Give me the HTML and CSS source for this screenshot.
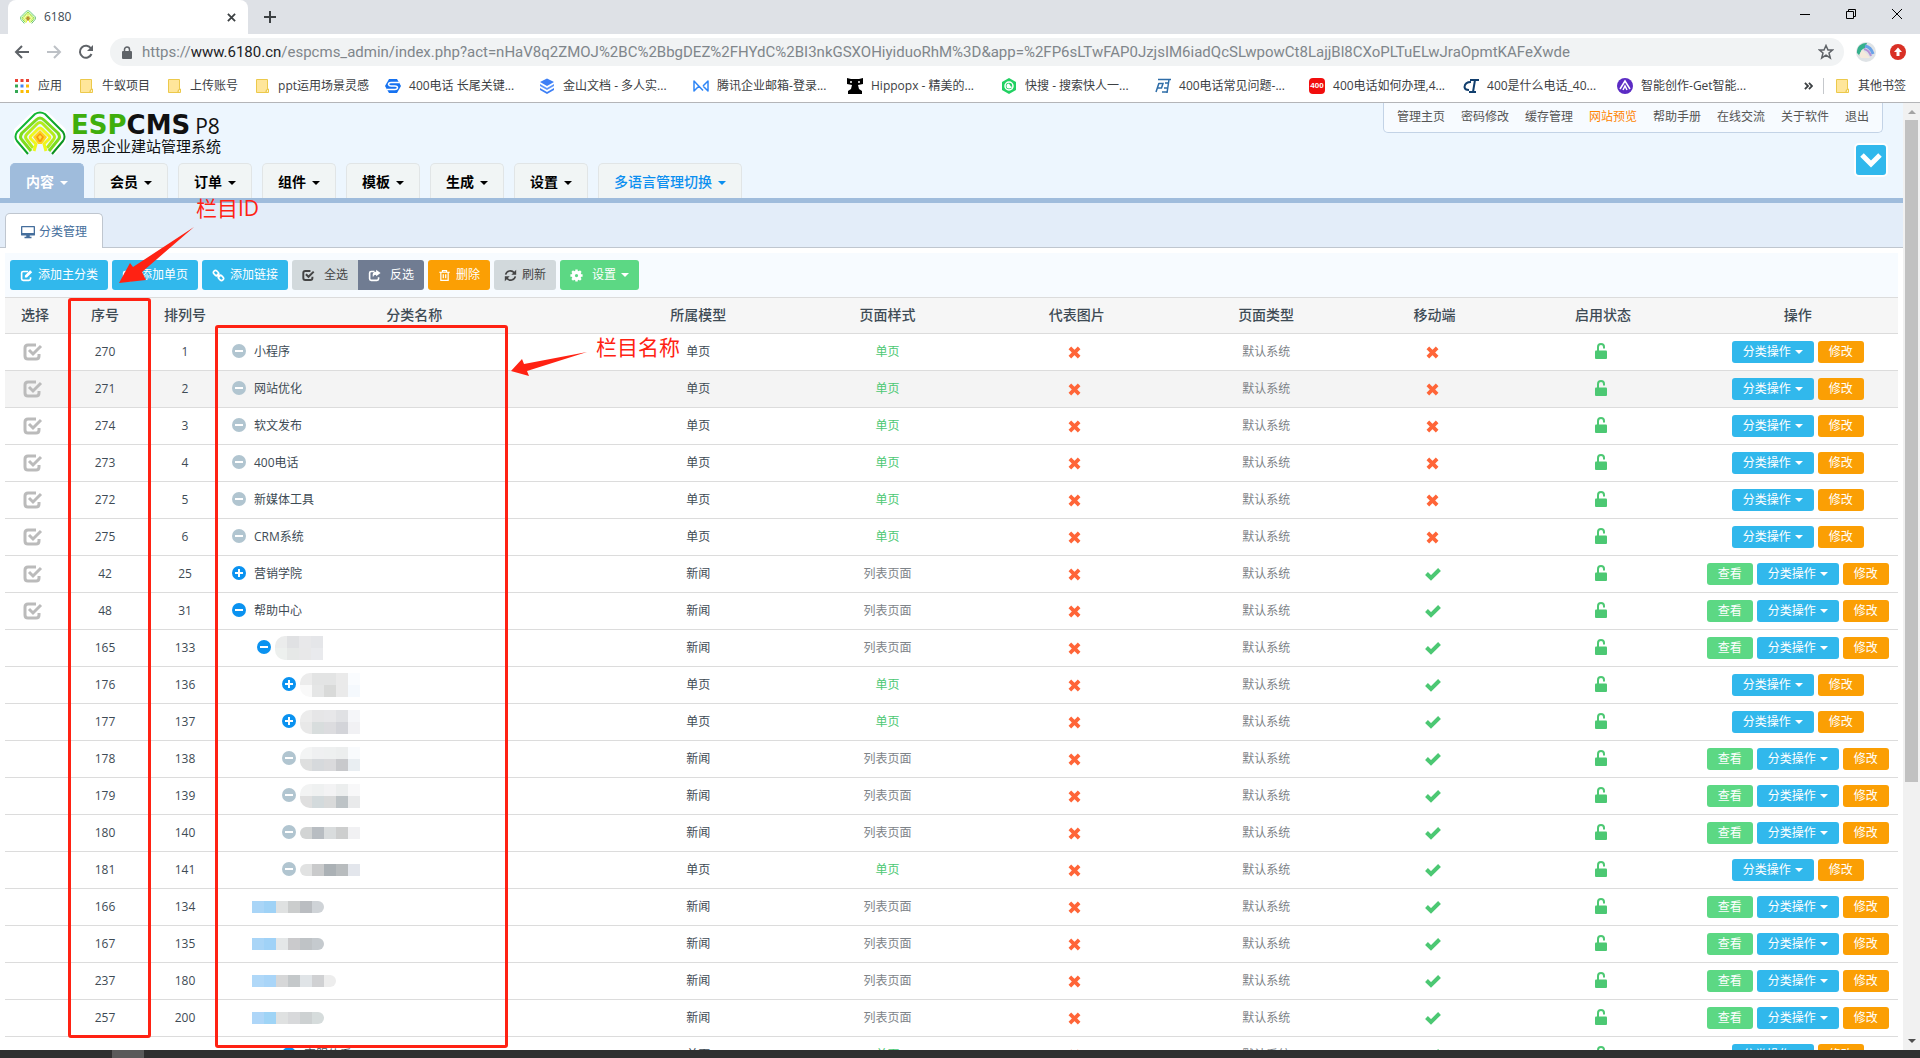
FILE: index.html
```
<!DOCTYPE html>
<html lang="zh-CN">
	<head>
		<meta charset="utf-8">
		<meta name="viewport" content="width=device-width, initial-scale=1.0">
		<title>6180</title>
		<link rel="stylesheet" href="styles.css">
	</head>
	<body>
		<!-- 图标库 -->
		<svg class="icon-defs" aria-hidden="true">
			<symbol id="i-logo" viewBox="0 0 52 44">
				<linearGradient id="g1" x1="0" y1="0" x2="1" y2="1"><stop offset="0" stop-color="#12c43a"/><stop offset="1" stop-color="#0a8a1c"/></linearGradient>
				<g fill="none" stroke-linejoin="round">
					<path stroke="#fff" stroke-width="8" d="M14 41L4 30Q1 26 3 21L21 4Q26 0 31 4L48 20Q51 26 48 30L38 41"/>
					<path stroke="url(#g1)" stroke-width="2" d="M14 43L3 30Q0 26 3 21L21 3Q26 0 31 3L49 21Q52 26 49 30L38 43"/>
					<path stroke="#7ddc1e" stroke-width="3" d="M17 40L8 29Q5 26 8 22L22 9Q26 5 30 9L44 22Q47 26 44 29L35 40"/>
					<path stroke="#b4ec1c" stroke-width="3" d="M19 37L13 29Q10 26 13 23L23 13Q26 10 29 13L39 23Q42 26 39 29L33 37"/>
					<path stroke="#eef71c" stroke-width="3" d="M20 40L22 33L17 28Q15 26 18 24L24 18Q26 16 28 18L34 24Q37 26 35 28L30 33L32 40"/>
				</g>
				<path fill="#ffd21c" d="M26 19L33 26L28 33H24L19 26Z"/>
				<path fill="#f79a10" d="M26 22L30 26L27 31H25L22 26Z"/>
				<path fill="#ffe14a" d="M26 24L28 26L26 29L24 26Z"/>
			</symbol>
			<symbol id="i-folder" viewBox="0 0 16 16"><path fill="#ffe69a" stroke="#ecc94b" d="M2.500 1.500H13.500V11Q12 11 12 14.500H2.500Z"/><path fill="#fff2c4" stroke="#ecc94b" d="M12 14.500Q12 11 14.500 11V14.500Z"/></symbol>
			<symbol id="i-edit" viewBox="0 0 16 16"><path fill="none" stroke="currentColor" stroke-width="2" d="M10 3H4Q2 3 2 5V12Q2 14 4 14H11Q13 14 13 12V10"/><path fill="currentColor" d="M6 8L12.500 1.500L15 4L8.500 10.500H6Z"/></symbol>
			<symbol id="i-link" viewBox="0 0 16 16"><g fill="none" stroke="currentColor" stroke-width="2"><rect x="1.500" y="2.500" width="7" height="5" rx="2.500" transform="rotate(45 5 5)"/><rect x="7.500" y="8.500" width="7" height="5" rx="2.500" transform="rotate(45 11 11)"/><path d="M6 6L10 10"/></g></symbol>
			<symbol id="i-check-box" viewBox="0 0 20 18"><path fill="none" stroke="currentColor" stroke-width="3" d="M13 2H5Q2 2 2 5V13Q2 16 5 16H13Q16 16 16 13V11"/><path fill="none" stroke="currentColor" stroke-width="3" d="M6 7L10 11L18 3"/></symbol>
			<symbol id="i-share" viewBox="0 0 16 16"><path fill="none" stroke="currentColor" stroke-width="2" d="M8 3H4Q2 3 2 5V12Q2 14 4 14H11Q13 14 13 12V10"/><path fill="currentColor" d="M10 1L15.500 5L10 9V7Q7 7 6 10Q4.500 3.500 10 3.500Z"/></symbol>
			<symbol id="i-trash" viewBox="0 0 16 16"><path fill="none" stroke="currentColor" stroke-width="1.500" d="M1.500 4H14.500M5.500 4V2H10.500V4M3.500 4V14H12.500V4M6.500 6.500V11.500M9.500 6.500V11.500"/></symbol>
			<symbol id="i-refresh" viewBox="0 0 16 16"><path fill="none" stroke="currentColor" stroke-width="2" d="M2 7A6 6 0 0 1 12.500 4.500M14 9A6 6 0 0 1 3.500 11.500"/><path fill="currentColor" d="M15 1V7H9ZM1 15V9H7Z"/></symbol>
			<symbol id="i-gear" viewBox="0 0 16 16"><circle cx="8" cy="8" r="4" fill="none" stroke="currentColor" stroke-width="4"/><path stroke="currentColor" stroke-width="3" d="M8 0.500V3M8 13V15.500M0.500 8H3M13 8H15.500M2.700 2.700L4.500 4.500M11.500 11.500L13.300 13.300M2.700 13.300L4.500 11.500M11.500 4.500L13.300 2.700"/></symbol>
			<symbol id="i-screen" viewBox="0 0 16 16"><path fill="currentColor" d="M1 1H15Q16 1 16 2V11Q16 12 15 12H10V13.500H12V15H4V13.500H6V12H1Q0 12 0 11V2Q0 1 1 1ZM1.500 2.500V9H14.500V2.500Z"/></symbol>
			<symbol id="i-times" viewBox="0 0 14 14"><path stroke="currentColor" stroke-width="4" d="M2 2L12 12M12 2L2 12"/></symbol>
			<symbol id="i-check" viewBox="0 0 16 14"><path fill="none" stroke="currentColor" stroke-width="4" d="M1.500 6.500L6 11L14.500 2.500"/></symbol>
			<symbol id="i-unlock" viewBox="0 0 12 16"><path fill="none" stroke="currentColor" stroke-width="2" d="M3 8V4A3 3 0 0 1 9 4V5.500"/><rect y="7.500" width="12" height="8.500" rx="1" fill="currentColor"/></symbol>
			<symbol id="i-minus" viewBox="0 0 14 14"><circle cx="7" cy="7" r="7" fill="currentColor"/><path stroke="#fff" stroke-width="2" d="M3 7H11"/></symbol>
			<symbol id="i-plus" viewBox="0 0 14 14"><circle cx="7" cy="7" r="7" fill="currentColor"/><path stroke="#fff" stroke-width="2" d="M3 7H11M7 3V11"/></symbol>
		</svg>

		<!-- 浏览器标签栏 -->
		<div class="tabstrip">
			<div class="browser-tab">
				<svg class="favicon"><use href="#i-logo"/></svg>
				<span>6180</span>
				<button aria-label="关闭标签页"><svg viewBox="0 0 10 10"><path d="M1 1L9 9M9 1L1 9"/></svg></button>
			</div>
			<button class="new-tab" aria-label="新标签页"><svg viewBox="0 0 12 12"><path d="M6 0V12M0 6H12"/></svg></button>
			<div class="window-btns">
				<button aria-label="最小化"><svg viewBox="0 0 10 10"><path d="M0 5.500H10"/></svg></button>
				<button aria-label="还原"><svg viewBox="0 0 10 10"><path d="M0.500 2.500H7.500V9.500H0.500ZM2.500 2.500V0.500H9.500V7.500H7.500"/></svg></button>
				<button aria-label="关闭"><svg viewBox="0 0 10 10"><path d="M0 0L10 10M10 0L0 10"/></svg></button>
			</div>
		</div>
		<div class="addressbar">
			<button class="nav-btn" aria-label="后退"><svg viewBox="0 0 16 16"><path d="M15 8H2M8 2L2 8L8 14"/></svg></button>
			<button class="nav-btn disabled" aria-label="前进"><svg viewBox="0 0 16 16"><path d="M1 8H14M8 2L14 8L8 14"/></svg></button>
			<button class="nav-btn" aria-label="刷新"><svg viewBox="0 0 16 16"><path d="M13.500 10A6 6 0 1 1 13 4.500"/><path class="solid" d="M15 1V7H9Z"/></svg></button>
			<div class="omnibox">
				<svg class="lock" viewBox="0 0 10 13"><path fill="none" stroke="#5f6368" stroke-width="1.500" d="M2.500 6V3.500A2.500 2.500 0 0 1 7.500 3.500V6"/><rect y="5" width="10" height="8" rx="1" fill="#5f6368"/></svg>
				<div class="url" role="textbox" contenteditable="true" spellcheck="false" aria-label="地址">https://<b>www.6180.cn</b>/espcms_admin/index.php?act=nHaV8q2ZMOJ%2BC%2BbgDEZ%2FHYdC%2BI3nkGSXOHiyiduoRhM%3D&amp;app=%2FP6sLTwFAP0JzjsIM6iadQcSLwpowCt8LajjBl8CXoPLTuELwJraOpmtKAFeXwde</div>
				<button class="star" aria-label="收藏"><svg viewBox="0 0 16 16"><path d="M8 1.500L10 6H14.500L11 9L12.300 14L8 11.200L3.700 14L5 9L1.500 6H6Z"/></svg></button>
			</div>
			<svg class="avatar" viewBox="0 0 20 20"><circle cx="10" cy="10" r="10" fill="#dfe3e6"/><path fill="#35b08c" d="M1 11A9 9 0 0 1 11 1L9 6Q4 7 4 14Z"/><path fill="none" stroke="#6aa2e8" stroke-width="3" d="M9 4Q15 5 17 12"/><path fill="none" stroke="#b391d8" stroke-width="2" d="M8 7Q13 8 15 14"/><path fill="#f4e9dc" d="M6 8L11 12L14 16H5L3 13Z"/></svg>
			<svg class="update" viewBox="0 0 16 16"><circle cx="8" cy="8" r="8" fill="#d93025"/><path fill="#fff" d="M8 3.500L12 8H9.500V12H6.500V8H4Z"/></svg>
		</div>
		<nav class="bookmarks">
			<a href="#"><svg viewBox="0 0 16 16"><path fill="#ea4335" d="M1 1h3v3h-3zM6.500 1h3v3h-3zM12 1h3v3h-3z"/><path fill="#34a853" d="M1 6.500h3v3h-3zM1 12h3v3h-3z"/><path fill="#4285f4" d="M6.500 6.500h3v3h-3z"/><path fill="#fbbc05" d="M12 6.500h3v3h-3zM6.500 12h3v3h-3zM12 12h3v3h-3z"/></svg>应用</a>
			<a href="#"><svg><use href="#i-folder"/></svg>牛蚁项目</a>
			<a href="#"><svg><use href="#i-folder"/></svg>上传账号</a>
			<a href="#"><svg><use href="#i-folder"/></svg>ppt运用场景灵感</a>
			<a class="site" href="#"><svg viewBox="0 0 16 16"><path fill="#1672f0" d="M4 1H12L16 8L12 15H4L0 8Z"/><path fill="none" stroke="#fff" stroke-width="1.500" d="M14 4.500H6Q3.500 4.500 3.500 6.500Q4 8 6 8H10Q12.500 8 12.500 10Q12 11.500 10 11.500H2"/></svg>400电话 长尾关键...</a>
			<a class="site" href="#"><svg viewBox="0 0 16 16"><path fill="#3d7ff5" d="M8 0.500L15 4L8 8L1 4Z"/><path fill="#5b95fa" d="M1 6L8 10L15 6V8L8 12L1 8Z"/><path fill="#3d7ff5" d="M1 10L8 14L15 10V12L8 16L1 12Z"/></svg>金山文档 - 多人实...</a>
			<a class="site" href="#"><svg viewBox="0 0 16 16"><path fill="none" stroke="#2f86f6" stroke-width="1.500" stroke-linejoin="round" d="M6 8L1 13V3L10 12.500M10 8L15 3V13L10 8"/></svg>腾讯企业邮箱-登录...</a>
			<a class="site" href="#"><svg viewBox="0 0 16 16"><path d="M0 0L4 1H12L16 0V6L11 7L12 11L15 13V16H1V13L4 11L5 7L0 6Z"/><circle cx="4" cy="4" r="1" fill="#fff"/><circle cx="12" cy="4" r="1" fill="#fff"/></svg>Hippopx - 精美的...</a>
			<a class="site" href="#"><svg viewBox="0 0 16 16"><path fill="#21d162" d="M8 0L15 4V12L8 16L1 12V4Z"/><circle cx="8" cy="8" r="4" fill="none" stroke="#fff" stroke-width="1.500"/><path fill="#fff" d="M8 5.500A2.500 2.500 0 1 0 10.500 8L12 12Z"/></svg>快搜 - 搜索快人一...</a>
			<a class="site" href="#"><svg viewBox="0 0 16 16"><path fill="none" stroke="#2e6da8" stroke-width="1.500" d="M3 1.500H16M4 5L1 14M4 5.500H8L6.500 10H3M14 1.500L12 15M10 5H13M9 10H12M7 14H12"/></svg>400电话常见问题-...</a>
			<a class="site" href="#"><span class="badge-400">400</span>400电话如何办理,4...</a>
			<a class="site" href="#"><svg viewBox="0 0 16 16"><path fill="none" stroke="#123f6e" stroke-width="2" d="M8 4Q2 4 1.500 9Q2 12 6 12M7 2H16M12 2L10 14M6 14H13"/></svg>400是什么电话_40...</a>
			<a class="site" href="#"><svg viewBox="0 0 16 16"><circle cx="8" cy="8" r="8" fill="#5b2bc4"/><path fill="none" stroke="#fff" stroke-width="1.500" d="M3 11L8 3L13 11M6 12L8 8L10 12"/></svg>智能创作-Get智能...</a>
			<button class="more" aria-label="更多书签"><svg viewBox="0 0 10 10"><path d="M1 1.500L4.500 5L1 8.500M5.500 1.500L9 5L5.500 8.500"/></svg></button>
			<a class="other" href="#"><svg><use href="#i-folder"/></svg>其他书签</a>
		</nav>

		<div class="viewport">
			<div class="page">
				<header class="header">
					<a class="logo" href="#">
						<svg class="logo-mark"><use href="#i-logo"/></svg>
						<span class="logo-text">
							<span class="logo-name"><b><i>ESP</i>CMS</b>P8</span>
							<span class="logo-sub">易思企业建站管理系统</span>
						</span>
					</a>
					<div class="header-right">
						<nav class="top-links">
							<a href="#">管理主页</a>
							<a href="#">密码修改</a>
							<a href="#">缓存管理</a>
							<a class="hot" href="#">网站预览</a>
							<a href="#">帮助手册</a>
							<a href="#">在线交流</a>
							<a href="#">关于软件</a>
							<a href="#">退出</a>
						</nav>
						<button class="toggle" aria-label="展开"><svg viewBox="0 0 24 20"><path d="M3 5L12 14L21 5"/></svg></button>
					</div>
				</header>
				<nav class="menu">
					<button class="active">内容<i class="caret"></i></button>
					<button>会员<i class="caret"></i></button>
					<button>订单<i class="caret"></i></button>
					<button>组件<i class="caret"></i></button>
					<button>模板<i class="caret"></i></button>
					<button>生成<i class="caret"></i></button>
					<button>设置<i class="caret"></i></button>
					<button class="lang">多语言管理切换<i class="caret"></i></button>
				</nav>
				<div class="subtabs">
					<a href="#"><svg><use href="#i-screen"/></svg>分类管理</a>
				</div>
				<main>
					<div class="toolbar">
						<button class="btn blue"><svg><use href="#i-edit"/></svg>添加主分类</button>
						<button class="btn blue"><svg><use href="#i-edit"/></svg>添加单页</button>
						<button class="btn blue"><svg><use href="#i-link"/></svg>添加链接</button>
						<div class="btn-group">
							<button class="btn gray wide"><svg><use href="#i-check-box"/></svg>全选</button>
							<button class="btn slate wide"><svg><use href="#i-share"/></svg>反选</button>
						</div>
						<button class="btn orange"><svg><use href="#i-trash"/></svg>删除</button>
						<button class="btn gray"><svg><use href="#i-refresh"/></svg>刷新</button>
						<button class="btn green wide"><svg><use href="#i-gear"/></svg>设置<i class="caret"></i></button>
					</div>
					<table>
						<thead>
							<tr>
								<th class="c-pick">选择</th>
								<th class="c-num">序号</th>
								<th class="c-num">排列号</th>
								<th class="c-name">分类名称</th>
								<th class="c-std">所属模型</th>
								<th class="c-std">页面样式</th>
								<th class="c-std">代表图片</th>
								<th class="c-std">页面类型</th>
								<th class="c-mobile">移动端</th>
								<th class="c-std">启用状态</th>
								<th>操作</th>
							</tr>
						</thead>
						<tbody id="rows"></tbody>
					</table>
				</main>
				<!-- 标注 -->
				<div class="mark-box mark-id"></div>
				<div class="mark-box mark-name"></div>
				<span class="mark-label label-id">栏目ID</span>
				<span class="mark-label label-name">栏目名称</span>
				<svg class="arrow arrow-id" viewBox="0 0 76 58"><path d="M75 2L23 47L27 55L0 58L11 38L14 42Z"/></svg>
				<svg class="arrow arrow-name" viewBox="0 0 76 26"><path d="M76 1L16 20L18 25L0 20L11 8L13 13Z"/></svg>
			</div>
			<div class="scrollbar"><i class="up"></i><div class="thumb"></div><i class="down"></i></div>
		</div>
		<div class="taskbar"><span></span></div>
		<script src="script.js"></script>
	</body>
</html>
```
FILE: styles.css
```
* {
	box-sizing: border-box;
}
body {
	margin: 0;
	height: 100vh;
	display: flex;
	flex-direction: column;
	overflow: hidden;
	font: 12px/18px "Open Sans", "Noto Sans CJK SC", sans-serif;
	color: #3e4b55;
	background: #fff;
}
a {
	color: inherit;
	text-decoration: none;
}
button {
	font: inherit;
	color: inherit;
	padding: 0;
	border: none;
	background: none;
	cursor: pointer;
}
svg {
	display: block;
	flex: none;
}
.icon-defs {
	position: absolute;
	width: 0;
	height: 0;
}
.caret {
	display: inline-block;
	margin-left: 4px;
	border: 4px solid transparent;
	border-top-color: currentColor;
	border-bottom: none;
	vertical-align: 2px;
}

/* 浏览器外框 */
.tabstrip {
	flex: none;
	height: 34px;
	display: flex;
	align-items: center;
	padding-left: 8px;
	background: #dee1e6;
}
.tabstrip svg {
	fill: none;
	stroke: #3c4043;
}
.browser-tab {
	width: 240px;
	height: 34px;
	display: flex;
	align-items: center;
	padding: 0 12px;
	border-radius: 8px 8px 0 0;
	background: #fff;
}
.browser-tab span {
	flex: 1;
	margin-left: 8px;
}
.browser-tab .favicon {
	width: 16px;
	height: 14px;
}
.browser-tab button svg {
	width: 9px;
	height: 9px;
	stroke-width: 2;
}
.new-tab {
	margin-left: 16px;
}
.new-tab svg {
	width: 12px;
	height: 12px;
	stroke-width: 2;
}
.window-btns {
	margin-left: auto;
	height: 28px;
	align-self: flex-start;
	display: flex;
}
.window-btns button {
	width: 46px;
}
.window-btns svg {
	width: 10px;
	height: 10px;
	margin: auto;
	stroke: #000;
}
.addressbar {
	flex: none;
	height: 36px;
	display: flex;
	align-items: center;
	padding: 0 14px;
}
.nav-btn {
	width: 16px;
	margin-right: 16px;
}
.nav-btn svg {
	width: 16px;
	height: 16px;
	fill: none;
	stroke: #5f6368;
	stroke-width: 2;
}
.nav-btn .solid {
	fill: #5f6368;
	stroke: none;
}
.nav-btn.disabled svg {
	stroke: #bdc1c6;
}
.omnibox {
	flex: 1;
	height: 28px;
	display: flex;
	align-items: center;
	padding: 0 10px 0 12px;
	border-radius: 14px;
	background: #f1f3f4;
}
.lock {
	width: 10px;
	height: 13px;
}
.url {
	flex: 1;
	margin-left: 10px;
	font-family: Roboto, "Open Sans", sans-serif;
	font-size: 15px;
	white-space: nowrap;
	color: #80868b;
}
.url b {
	font-weight: normal;
	color: #202124;
}
.star svg {
	width: 16px;
	height: 16px;
	fill: none;
	stroke: #5f6368;
	stroke-width: 1.5;
}
.avatar {
	width: 20px;
	height: 20px;
	margin: 0 14px 0 12px;
}
.update {
	width: 16px;
	height: 16px;
}
.bookmarks {
	flex: none;
	height: 33px;
	display: flex;
	align-items: center;
	padding: 0 14px;
	border-bottom: 1px solid #b4b5b8;
	color: #3c4043;
}
.bookmarks a {
	display: flex;
	align-items: center;
	gap: 8px;
	margin-right: 16px;
	white-space: nowrap;
}
.bookmarks a svg {
	width: 16px;
	height: 16px;
}
.bookmarks .site {
	width: 138px;
}
.badge-400 {
	width: 16px;
	border-radius: 4px;
	font: bold 8px/16px "Liberation Sans", sans-serif;
	text-align: center;
	color: #fff;
	background: #f10d0d;
}
.bookmarks .more {
	margin-left: auto;
	padding-right: 10px;
	border-right: 1px solid #c5c8cc;
}
.more svg {
	width: 9px;
	height: 16px;
	fill: none;
	stroke: #3c4043;
	stroke-width: 2;
}
.bookmarks .other {
	margin: 0 0 0 10px;
}

/* 页面 */
.viewport {
	flex: 1;
	min-height: 0;
	display: flex;
	overflow: hidden;
}
.page {
	position: relative;
	flex: 1;
	overflow: hidden;
}
.header {
	height: 60px;
	display: flex;
	justify-content: space-between;
	background: #edf6fe;
}
.logo {
	display: flex;
	padding: 8px 0 0 14px;
	gap: 5px;
	color: #111;
}
.logo-mark {
	width: 52px;
	height: 44px;
}
.logo-name {
	display: flex;
	align-items: baseline;
	gap: 5px;
	padding-top: 3px;
	font-size: 21px;
	line-height: 22px;
}
.logo-name b {
	font: bold 26px/22px "DejaVu Sans", sans-serif;
}
.logo-name i {
	font-style: normal;
	color: #3fae0c;
}
.logo-sub {
	display: block;
	font-size: 15px;
	line-height: 18px;
}
.header-right {
	display: flex;
	flex-direction: column;
	align-items: flex-end;
	padding-right: 20px;
}
.top-links {
	display: flex;
	gap: 16px;
	padding: 5px 13px 6px;
	border: 1px solid #c3d3e6;
	border-top: none;
	border-radius: 0 0 5px 5px;
	color: #555;
	background: #f7fbff;
}
.top-links .hot {
	color: #ff8400;
}
.toggle {
	z-index: 1;
	flex: none;
	width: 34px;
	height: 34px;
	margin: 10px -5px 0 0;
	border: 2px solid #fff;
	border-radius: 5px;
	background: #31b8ec;
}
.toggle svg {
	width: 24px;
	height: 20px;
	margin: auto;
	fill: none;
	stroke: #fff;
	stroke-width: 5;
}
.menu {
	height: 40px;
	display: flex;
	gap: 10px;
	padding-left: 10px;
	border-bottom: 5px solid #9fbcdc;
	background: #edf6fe;
}
.menu button {
	padding: 2px 15px 0;
	border: 1px solid #e1e5e6;
	border-bottom: none;
	border-radius: 5px 5px 0 0;
	font-size: 14px;
	font-weight: bold;
	color: #000;
	background: #f1f5f5;
}
.menu .caret {
	margin-left: 6px;
}
.menu .active {
	border-color: #9fbcdc;
	color: #fff;
	background: #9fbcdc;
}
.menu .lang {
	font-weight: 500;
	color: #0b8ff0;
}
.subtabs {
	height: 45px;
	display: flex;
	padding: 10px 5px 0;
	background: #e3edf9;
	box-shadow: inset 0 -1px #bfc6cf;
}
.subtabs a {
	display: flex;
	align-items: center;
	gap: 4px;
	padding: 2px 15px 0;
	border: 1px solid #bfc6cf;
	border-bottom: none;
	border-radius: 5px 5px 0 0;
	color: #456e9c;
	background: #fff;
}
.subtabs svg {
	width: 14px;
	height: 14px;
}
main {
	padding: 5px;
}
.toolbar {
	height: 44px;
	display: flex;
	align-items: center;
	gap: 4px;
	padding-left: 5px;
	background: #f7fbff;
}
.btn {
	height: 30px;
	display: flex;
	align-items: center;
	gap: 5px;
	padding: 0 10px;
	border-radius: 3px;
	color: #fff;
}
.btn svg {
	width: 13px;
	height: 13px;
}
.btn .caret {
	margin-left: 0;
}
.btn-group {
	display: flex;
}
.btn-group .btn:first-child {
	border-radius: 3px 0 0 3px;
}
.btn-group .btn:last-child {
	border-radius: 0 3px 3px 0;
}
.wide svg {
	margin-right: 4px;
}
.blue { background: #31b8ec; }
.orange { background: #fb9f04; }
.green { background: #5cd884; }
.slate { background: #707c92; }
.gray {
	color: #444;
	background: #d2d9dc;
}

/* 分类列表 */
table {
	width: 100%;
	table-layout: fixed;
	border-collapse: collapse;
	border-top: 1px solid #dcdcdc;
}
th {
	height: 36px;
	padding: 0 0 2px;
	font-size: 14px;
	font-weight: 500;
	background: #f6f6f6;
	border-bottom: 1px solid #dcdcdc;
}
.c-pick { width: 60px; }
.c-num { width: 80px; }
.c-name { width: 20%; }
.c-std { width: 10%; }
.c-mobile { width: 7.8%; }
td {
	height: 37px;
	padding: 0;
	text-align: center;
	border-bottom: 1px solid #dcdcdc;
}
td.mark {
	padding-right: 4px;
}
td > svg {
	margin: 0 auto;
}
tr.hover {
	background: #f4f4f4;
}
.pick {
	position: relative;
	display: block;
	width: 20px;
	margin: 0 18px;
	color: #bbb;
}
.pick input {
	position: absolute;
	width: 20px;
	height: 18px;
	margin: 0;
	opacity: 0;
}
.pick svg {
	width: 20px;
	height: 18px;
}
.name {
	display: flex;
	align-items: center;
	padding-left: 7px;
}
.name svg {
	width: 14px;
	height: 14px;
	margin: 0 8px 2px 0;
	color: #b1c5d0;
}
.name svg.on {
	color: #0a92f0;
}
.level-1 { padding-left: 32px; }
.level-2 { padding-left: 57px; }
.masked svg {
	margin-right: 4px;
}
.flat {
	padding-left: 27px;
}
.mosaic {
	overflow: hidden;
	border-radius: 10px 0 0 10px;
}
.flat .mosaic {
	border-radius: 0 6px 6px 0;
}
.mosaic span {
	display: flex;
}
.mosaic i {
	width: 12px;
	height: 12px;
}
.style-page, .yes, .unlock {
	color: #4cc873;
}
.style-list, .type {
	color: #7d8388;
}
.no {
	width: 13px;
	height: 13px;
	color: #ff6538;
}
.yes {
	width: 16px;
	height: 14px;
}
td .unlock {
	width: 12px;
	height: 16px;
	margin-bottom: 2px;
}
.actions {
	display: flex;
	justify-content: center;
	gap: 4px;
}
.actions .btn {
	height: 22px;
	padding: 0 11px;
	gap: 4px;
}

/* 标注层 */
.mark-box {
	position: absolute;
	border: 3px solid #ff2213;
	border-radius: 3px;
}
.mark-id {
	left: 68px;
	top: 195px;
	width: 83px;
	height: 740px;
}
.mark-name {
	left: 215px;
	top: 222px;
	width: 293px;
	height: 723px;
}
.mark-label {
	position: absolute;
	font-size: 21px;
	line-height: 24px;
	color: #ff2213;
}
.label-id {
	left: 196px;
	top: 93px;
}
.label-name {
	left: 596px;
	top: 232px;
}
.arrow {
	position: absolute;
	fill: #ff2213;
}
.arrow-id {
	left: 119px;
	top: 122px;
	width: 76px;
	height: 58px;
}
.arrow-name {
	left: 511px;
	top: 248px;
	width: 76px;
	height: 26px;
}

.scrollbar {
	width: 17px;
	display: flex;
	flex-direction: column;
	align-items: center;
	padding: 7px 0;
	background: #f1f1f1;
}
.scrollbar .thumb {
	width: 13px;
	height: 71%;
	margin-top: 6px;
	background: #c1c1c1;
}
.scrollbar .up {
	border: 4px solid transparent;
	border-top: none;
	border-bottom-color: #a3a3a3;
}
.scrollbar .down {
	margin-top: auto;
	border: 4px solid transparent;
	border-bottom: none;
	border-top-color: #505050;
}
.taskbar {
	flex: none;
	height: 8px;
	padding-left: 112px;
	background: #2f2f2f;
}
.taskbar span {
	display: block;
	width: 32px;
	height: 8px;
	background: #5a5a5a;
}
```
FILE: script.js
```
// 序号, 排列号, 名称/色块, 层级, 图标, 模型, 移动端
const rows = [
	[270, 1, "小程序", 0, "minus", "单页", 0],
	[271, 2, "网站优化", 0, "minus", "单页", 0],
	[274, 3, "软文发布", 0, "minus", "单页", 0],
	[273, 4, "400电话", 0, "minus", "单页", 0],
	[272, 5, "新媒体工具", 0, "minus", "单页", 0],
	[275, 6, "CRM系统", 0, "minus", "单页", 0],
	[42, 25, "营销学院", 0, "plus on", "新闻", 1],
	[48, 31, "帮助中心", 0, "minus on", "新闻", 1],
	[165, 133, [["#ebecec", "#e0e1e3", "#e8e8ea", "#e5e6e9"], ["#edf0ee", "#e6e8e7", "#e8e8e9", "#e9eaed"]], 1, "minus on", "新闻", 1],
	[176, 136, [["#ececec", "#e3e4e4", "#e3e4e4", "#eaeaea", "#fafcfe"], ["#f9f9f9", "#e5e6e6", "#d9dad9", "#eaeaea", "#f5f9fd"]], 2, "plus on", "单页", 1],
	[177, 137, [["#ececec", "#e6e6e7", "#e7e7e9", "#e0e1e4", "#f5f6f9"], ["#e8e8e8", "#d8dddd", "#dcdcdf", "#d3d4d9", "#f1f1f4"]], 2, "plus on", "单页", 1],
	[178, 138, [["#f3f4f4", "#eff0f1", "#eef0f0", "#eceeee", "#f9fbfd"], ["#dedfdf", "#d6d9dc", "#dadadc", "#c8c9cc", "#e9eef2"]], 2, "minus", "新闻", 1],
	[179, 139, [["#f2f3f3", "#eff1f1", "#f3f3f4", "#eceeee", "#f8f8f9"], ["#dfdfdf", "#d3dadc", "#d9dada", "#bdc3c6", "#e9eaeb"]], 2, "minus", "新闻", 1],
	[180, 140, [["#d2d4d4", "#b8bdc2", "#d9dcdd", "#cdcece", "#f1f1f3"]], 2, "minus", "新闻", 1],
	[181, 141, [["#e1e2e2", "#c9cacb", "#abb1b5", "#b8bcbe", "#e3e6ec"]], 2, "minus", "单页", 1],
	[166, 134, [["#a9d5f7", "#9fd2f6", "#dfe1e1", "#cbcdcd", "#babdc1", "#cfd3d7"]], 1, "", "新闻", 1],
	[167, 135, [["#a9d5f7", "#a0d2f7", "#e4e7e8", "#cacacc", "#bfc3c6", "#c5cace"]], 1, "", "新闻", 1],
	[237, 180, [["#b0d8f8", "#a9d5f8", "#d6d7d8", "#c4c8ca", "#e0e4e7", "#d0d1d3", "#ededed"]], 1, "", "新闻", 1],
	[257, 200, [["#aed6f8", "#9fd4f6", "#dfe1e1", "#d8d9db", "#cdd1d2", "#d6dcdc"]], 1, "", "新闻", 1],
	[258, 201, "客服体系", 2, "minus on", "单页", 1]
];

function icon(name, cls) {
	return `<svg class="${cls}"><use href="#i-${name}"/></svg>`;
}

function mosaic(lines) {
	const cells = lines.map(line => `<span>${line.map(c => `<i style="background:${c}"></i>`).join("")}</span>`);
	return `<div class="mosaic">${cells.join("")}</div>`;
}

function nameCell(name, level, state) {
	const [shape, on] = state.split(" ");
	const masked = Array.isArray(name);
	const mark = shape ? icon(shape, on || "") : "";
	return `<div class="name level-${level} ${masked ? "masked" : ""} ${shape ? "" : "flat"}">${mark}${masked ? mosaic(name) : name}</div>`;
}

document.getElementById("rows").innerHTML = rows.map(([id, order, name, level, state, model, mobile], i) => {
	const page = model === "单页";
	const pick = level ? "" : `<label class="pick"><input type="checkbox" aria-label="选择 ${id}">${icon("check-box", "")}</label>`;
	return `<tr class="${i === 1 ? "hover" : ""}">
		<td>${pick}</td>
		<td>${id}</td>
		<td>${order}</td>
		<td>${nameCell(name, level, state)}</td>
		<td>${model}</td>
		<td class="${page ? "style-page" : "style-list"}">${page ? "单页" : "列表页面"}</td>
		<td class="mark">${icon("times", "no")}</td>
		<td class="type">默认系统</td>
		<td class="mark">${mobile ? icon("check", "yes") : icon("times", "no")}</td>
		<td class="mark">${icon("unlock", "unlock")}</td>
		<td><div class="actions">
			${page ? "" : `<button class="btn green">查看</button>`}
			<button class="btn blue">分类操作<i class="caret"></i></button>
			<button class="btn orange">修改</button>
		</div></td>
	</tr>`;
}).join("");
```
